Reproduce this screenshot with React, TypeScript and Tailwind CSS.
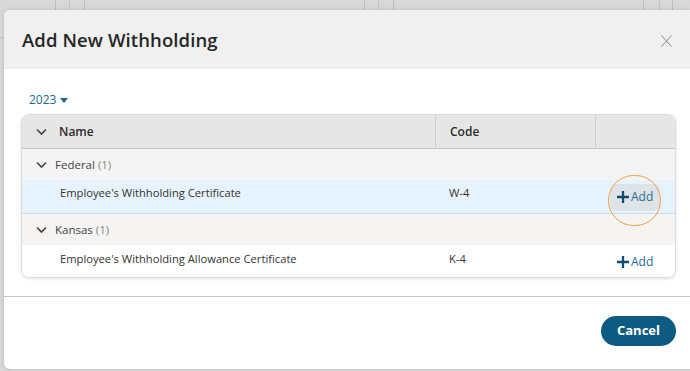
import React from "react";

const Chevron = () => (
  <svg width="11" height="8" viewBox="0 0 11 8" className="shrink-0">
    <path d="M1 1.5 L5.5 6 L10 1.5" fill="none" stroke="#444" strokeWidth="1.6" />
  </svg>
);

const Plus = () => (
  <svg width="12" height="12" viewBox="0 0 12 12" className="shrink-0">
    <path d="M6 0 V12 M0 6 H12" stroke="#114e6e" strokeWidth="2.3" />
  </svg>
);

const AddBtn = ({ hover }: { hover?: boolean }) => (
  <div
    className={`flex items-center gap-[2px] h-[27px] px-[7px] rounded-[6px] text-[12px] text-[#2a6c92] ${
      hover ? "bg-[#dde3e7]" : ""
    }`}
  >
    <Plus />
    <span>Add</span>
  </div>
);

export default function App() {
  return (
    <div
      className="relative w-[690px] h-[371px] overflow-hidden bg-[#d8d8d8]"
      style={{ fontFamily: '"Open Sans", "Noto Sans", sans-serif' }}
    >
      {/* backdrop lines */}
      <div className="absolute top-0 left-[55px] w-px h-[10px] bg-[#bdbdbd]" />
      <div className="absolute top-0 left-[69px] w-px h-[10px] bg-[#c4c4c4]" />
      <div className="absolute top-0 left-[84px] w-px h-[10px] bg-[#bdbdbd]" />
      <div className="absolute top-0 left-[364px] w-px h-[10px] bg-[#bdbdbd]" />
      <div className="absolute top-0 left-[378px] w-px h-[10px] bg-[#c4c4c4]" />
      <div className="absolute top-0 left-[393px] w-px h-[10px] bg-[#bdbdbd]" />
      <div className="absolute top-0 left-[643px] w-px h-[10px] bg-[#bdbdbd]" />
      <div className="absolute top-0 left-[659px] w-px h-[10px] bg-[#c4c4c4]" />
      <div className="absolute top-0 left-[672px] w-px h-[10px] bg-[#bdbdbd]" />
      <div className="absolute top-[37px] left-0 w-[4px] h-px bg-[#c4c4c4]" />

      {/* modal */}
      <div className="absolute left-[4px] top-[10px] w-[690px] h-[359px] bg-white rounded-[6px] overflow-hidden shadow-[0_0_4px_rgba(0,0,0,0.15)] flex flex-col">
        <div className="h-[59px] bg-[#f0f0f0] flex items-center justify-between pl-[18px] pr-[16px] shrink-0">
          <div className="text-[18.5px] font-semibold text-[#262626] tracking-[0.1px]">
            Add New Withholding
          </div>
          <svg width="11" height="12" viewBox="0 0 11 12" className="mr-[6px] mt-[2px]">
            <path d="M0.5 0.5 L10.5 11.5 M10.5 0.5 L0.5 11.5" stroke="#8a8a8a" strokeWidth="1" />
          </svg>
        </div>

        <div className="pl-[17px] pt-[23px] w-[672px]">
          <div className="flex items-center gap-[4px] pl-[8px] h-[16px] text-[12px] text-[#1b6990]">
            <span>2023</span>
            <svg width="8" height="5" viewBox="0 0 8 5">
              <path d="M0 0 H8 L4 5 Z" fill="#1b6990" />
            </svg>
          </div>

          <div className="mt-[6px] w-[655px] rounded-[8px] border border-[#dcdcdc] overflow-hidden shadow-[0_1px_3px_rgba(0,0,0,0.12)] text-[11.2px] text-[#333]">
            <div className="grid grid-cols-[413px_160px_1fr] h-[34px] bg-[#e6e6e6] border-b border-[#c8c8c8] text-[12px]">
              <div className="flex items-center gap-[12px] pl-[14px]">
                <Chevron />
                <span className="font-semibold text-[#2b2b2b]">Name</span>
              </div>
              <div className="flex items-center pl-[14px] border-l border-[#cfcfcf] font-semibold text-[#2b2b2b]">
                Code
              </div>
              <div className="border-l border-[#cfcfcf]" />
            </div>

            <div className="flex items-center gap-[8px] pl-[14px] h-[31px] bg-[#f4f4f4] text-[#444] text-[11.5px]">
              <Chevron />
              <span>
                Federal <span className="text-[#888]">(1)</span>
              </span>
            </div>

            <div className="grid grid-cols-[413px_160px_1fr] h-[34px] bg-[#e7f3fc] border-b border-[#c9dceb]">
              <div className="flex items-center pl-[38px] -mt-[6px]">Employee's Withholding Certificate</div>
              <div className="flex items-center pl-[14px] -mt-[6px]">W-4</div>
              <div className="flex items-center pl-[15px] pt-[1px]">
                <AddBtn hover />
              </div>
            </div>

            <div className="flex items-center gap-[8px] pl-[14px] h-[31px] bg-[#f5f4f3] text-[#444] text-[11.5px]">
              <Chevron />
              <span>
                Kansas <span className="text-[#888]">(1)</span>
              </span>
            </div>

            <div className="grid grid-cols-[413px_160px_1fr] h-[32px] bg-white">
              <div className="flex items-center pl-[38px] -mt-[3px]">
                Employee's Withholding Allowance Certificate
              </div>
              <div className="flex items-center pl-[14px] -mt-[3px]">K-4</div>
              <div className="flex items-center pl-[15px] pt-[2px]">
                <AddBtn />
              </div>
            </div>
          </div>
        </div>

        <div className="mt-[18px] h-px bg-[#c6c6c6]" />

        <div className="flex justify-start pl-[597px] pt-[19px]">
          <button className="h-[30px] w-[75px] rounded-full bg-[#0d5b83] text-white text-[13px] font-bold">
            Cancel
          </button>
        </div>
      </div>

      {/* orange highlight ring */}
      <div className="absolute left-[608px] top-[175px] w-[53px] h-[51px] rounded-full border-[1.5px] border-[#f0a143]" />
    </div>
  );
}
